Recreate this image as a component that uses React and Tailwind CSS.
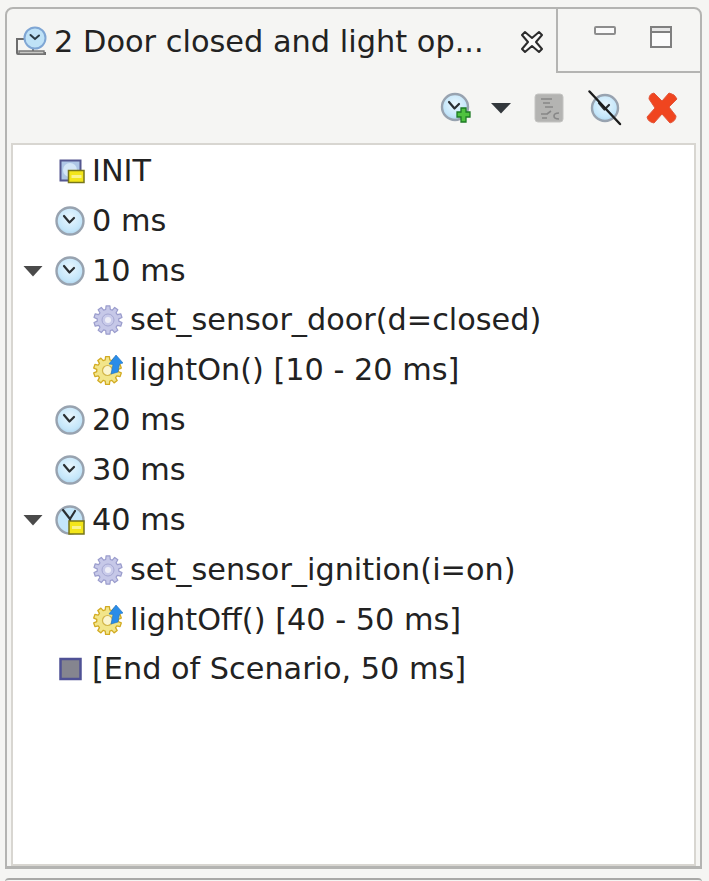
import React from "react";

function gearPath(cx, cy, ro, ri, teeth) {
  const pts = [];
  const step = (Math.PI * 2) / teeth;
  for (let i = 0; i < teeth; i++) {
    const a = i * step - Math.PI / 2;
    const o = [a - step * 0.22, a + step * 0.22];
    const n = [a + step * 0.34, a + step * 0.66];
    o.forEach((t) => pts.push([cx + ro * Math.cos(t), cy + ro * Math.sin(t)]));
    n.forEach((t) => pts.push([cx + ri * Math.cos(t), cy + ri * Math.sin(t)]));
  }
  return "M" + pts.map((p) => p[0].toFixed(2) + " " + p[1].toFixed(2)).join("L") + "Z";
}

const Clock = ({ cx = 15, cy = 15, r = 13.5 }) => (
  <g>
    <defs>
      <radialGradient id="clockFace" cx="0.5" cy="0.4" r="0.65">
        <stop offset="0" stopColor="#eaf7fe" />
        <stop offset="0.7" stopColor="#c4e6fa" />
        <stop offset="1" stopColor="#a9cfe8" />
      </radialGradient>
    </defs>
    <circle cx={cx} cy={cy} r={r} fill="url(#clockFace)" stroke="#98a3b0" strokeWidth="2.4" />
    <path
      d={`M${cx - 6} ${cy - 5}L${cx - 0.5} ${cy + 1.5}L${cx + 4} ${cy - 3}`}
      fill="none"
      stroke="#2a2f33"
      strokeWidth="2.2"
      strokeLinecap="round"
      strokeLinejoin="round"
    />
  </g>
);

const IconClock = () => (
  <svg width="30" height="30" viewBox="0 0 30 30"><Clock /></svg>
);

const IconClockLocked = () => (
  <svg width="30" height="30" viewBox="0 0 30 30">
    <circle cx="15" cy="15" r="13.5" fill="#c4e6fa" stroke="#98a3b0" strokeWidth="2.4" />
    <path d="M8 5L15 14L20 6M15 14V20" fill="none" stroke="#2a2f33" strokeWidth="2.2" strokeLinecap="round" strokeLinejoin="round" />
    <rect x="14" y="16" width="15" height="13" fill="#f3e61a" stroke="#77761c" strokeWidth="1.5" />
    <rect x="17" y="21" width="9" height="3" fill="#faf48c" />
  </svg>
);

const IconInit = () => (
  <svg width="30" height="30" viewBox="0 0 30 30">
    <rect x="5.5" y="4.5" width="20" height="20" fill="#aec6e6" stroke="#54578f" strokeWidth="2" />
    <circle cx="15" cy="14" r="7" fill="#d4e6f7" />
    <rect x="13.5" y="14.5" width="15.5" height="12" fill="#f3e61a" stroke="#77761c" strokeWidth="1.5" />
    <rect x="16.5" y="19" width="10" height="3" fill="#faf48c" />
  </svg>
);

const IconEnd = () => (
  <svg width="30" height="30" viewBox="0 0 30 30">
    <rect x="5.5" y="5" width="20" height="20" fill="#85858f" stroke="#4f5195" strokeWidth="2.5" />
  </svg>
);

const IconGear = () => (
  <svg width="30" height="30" viewBox="0 0 30 30">
    <path d={gearPath(15, 15, 14.2, 10.8, 10)} fill="#c6c8e8" stroke="#9a9ccc" strokeWidth="1.2" strokeLinejoin="round" />
    <circle cx="15" cy="15" r="6" fill="#c9cbea" stroke="#a5a7d2" strokeWidth="1" />
    <circle cx="15" cy="15" r="3" fill="#eeeef8" />
  </svg>
);

const IconGearArrow = () => (
  <svg width="30" height="30" viewBox="0 0 30 30">
    <path d={gearPath(14.5, 15.5, 14, 10.8, 10)} fill="#f2e58a" stroke="#d2ab22" strokeWidth="1.3" strokeLinejoin="round" />
    <circle cx="14.5" cy="15.5" r="5" fill="#fbf5cf" stroke="#d2b64a" strokeWidth="1.2" />
    <path d="M23 0L30 8L26.5 9L25 17L18 19L20 9.5L16 9Z" fill="#2a8ce8" stroke="#1a70c4" strokeWidth="0.6" />
  </svg>
);

const IconExpanded = () => (
  <svg width="20" height="12" viewBox="0 0 20 12">
    <path d="M0.5 1H19.5L10 11.5Z" fill="#4a4a4a" />
  </svg>
);

const IconTab = () => (
  <svg width="32" height="30" viewBox="0 0 32 30">
    <path d="M2 13H18V27H30V28H3Q2 28 2 27Z" fill="#f4f4f2" stroke="#6d6d6d" strokeWidth="2" />
    <path d="M4 25H29V28H4Z" fill="#c9c9c6" stroke="#777" strokeWidth="1.4" />
    <circle cx="20" cy="12" r="10.5" fill="#bfe2f7" stroke="#7fa6d4" strokeWidth="2" />
    <path d="M15.5 9L20 13L24 9.5" fill="none" stroke="#2a3a44" strokeWidth="2" strokeLinecap="round" />
  </svg>
);

const IconClose = () => (
  <svg width="24" height="24" viewBox="0 0 24 24">
    <path
      d="M5 2L12 8L19 2L22 5L16 12L22 19L19 22L12 16L5 22L2 19L8 12L2 5Z"
      fill="#fbfbfa"
      stroke="#2c2c2c"
      strokeWidth="2"
      strokeLinejoin="round"
    />
  </svg>
);

const IconMin = () => (
  <svg width="22" height="10" viewBox="0 0 22 10">
    <rect x="1" y="1" width="20" height="7" rx="1" fill="#fafafa" stroke="#8d8d8d" strokeWidth="2" />
  </svg>
);

const IconMax = () => (
  <svg width="22" height="22" viewBox="0 0 22 22">
    <rect x="1" y="1" width="20" height="20" fill="#fbfbfb" stroke="#7f7f7f" strokeWidth="2" />
    <rect x="1" y="1" width="20" height="5" fill="#e6e6e6" stroke="#7f7f7f" strokeWidth="2" />
  </svg>
);

const IconClockAdd = () => (
  <svg width="32" height="32" viewBox="0 0 32 32">
    <Clock cx={15} cy={15} r={13} />
    <path
      d="M19 17H23V13H28V17H32V22H28V27H23V22H19Z"
      transform="translate(-2 3)"
      fill="#4fc23f"
      stroke="#1d7a24"
      strokeWidth="1.3"
    />
  </svg>
);

const IconDisabled = () => (
  <svg width="30" height="30" viewBox="0 0 30 30">
    <rect x="1" y="1" width="28" height="28" rx="3" fill="#b4b4b2" stroke="#c4c4c2" strokeWidth="1" />
    <path
      d="M7 6H18M9 10H16M11 14H19M7 21H14M8 25H13M17 18L13 21"
      stroke="#878787"
      strokeWidth="1.6"
      fill="none"
    />
    <path d="M25 20Q20 20 20 23Q20 26 25 26" stroke="#878787" strokeWidth="1.6" fill="none" />
  </svg>
);

const IconClockOff = () => (
  <svg width="34" height="36" viewBox="0 0 34 36">
    <Clock cx={17} cy={18} r={13} />
    <path d="M1.5 1.5L32 34" stroke="#1c1c1c" strokeWidth="2.4" strokeLinecap="round" />
  </svg>
);

const IconRemove = () => (
  <svg width="32" height="32" viewBox="0 0 32 32">
    <path
      d="M8 1L16 9L23 1Q29 2 31 7L23 15L30 24Q30 29 24 31L16 22L8 31Q2 30 1 25L9 16L3 7Q3 2 8 1Z"
      fill="#f0451f"
      stroke="#e2563a"
      strokeWidth="1"
    />
  </svg>
);

const rows = [
  { icon: <IconInit />, label: "INIT" },
  { icon: <IconClock />, label: "0 ms" },
  { icon: <IconClock />, label: "10 ms", open: true },
  { icon: <IconGear />, label: "set_sensor_door(d=closed)", child: true },
  { icon: <IconGearArrow />, label: "lightOn() [10 - 20 ms]", child: true },
  { icon: <IconClock />, label: "20 ms" },
  { icon: <IconClock />, label: "30 ms" },
  { icon: <IconClockLocked />, label: "40 ms", open: true },
  { icon: <IconGear />, label: "set_sensor_ignition(i=on)", child: true },
  { icon: <IconGearArrow />, label: "lightOff() [40 - 50 ms]", child: true },
  { icon: <IconEnd />, label: "[End of Scenario, 50 ms]" },
];

export default function App() {
  return (
    <div className="h-[881px] w-[709px] overflow-hidden bg-[#f5f5f3] pl-[5px] pr-[7px] pt-[7px] text-[#222222] font-['DejaVu_Sans',sans-serif]">
      <div className="flex h-[862px] flex-col rounded-t-[8px] border-2 border-b-[3px] border-[#b4b4b2]">
        <div className="flex h-[64px] shrink-0">
          <div className="flex w-[549px] items-start pl-[8px] pr-[12px] pt-[17px]">
            <IconTab />
            <span className="ml-[7px] -mt-[1px] text-[30.4px] leading-[34px] whitespace-nowrap">2 Door closed and light op...</span>
            <span className="ml-auto mt-[4px] flex"><IconClose /></span>
          </div>
          <div className="flex flex-1 items-start border-b-2 border-l-2 border-[#b4b4b2] pl-[36px] pt-[17px]">
            <span className="flex"><IconMin /></span>
            <span className="ml-[34px] flex"><IconMax /></span>
          </div>
        </div>
        <div className="flex h-[70px] shrink-0 items-center pl-[433px]">
          <IconClockAdd />
          <span className="ml-[19px] flex"><svg width="20" height="12" viewBox="0 0 20 12"><path d="M0 1H20L10 11.5Z" fill="#33383c" /></svg></span>
          <span className="ml-[23px] flex"><IconDisabled /></span>
          <span className="ml-[24px] flex"><IconClockOff /></span>
          <span className="ml-[24px] flex"><IconRemove /></span>
        </div>
        <div className="mx-[4px] flex-1 border-2 border-[#d8d6d1] bg-white pt-px">
          {rows.map((r) => (
            <div key={r.label} className={`flex h-[49.85px] items-center ${r.child ? "pl-[80px]" : "pl-[42px]"}`}>
              {r.open ? (
                <span className="-ml-[32px] mr-[12px] flex w-[20px]"><IconExpanded /></span>
              ) : null}
              <span className="flex w-[30px]">{r.icon}</span>
              <span className="ml-[7px] text-[30.3px] leading-[34px] whitespace-nowrap">{r.label}</span>
            </div>
          ))}
        </div>
      </div>
      <div className="mt-[9px] h-[10px] rounded-t-[4px] border-t-2 border-[#a9a9a7]" />
    </div>
  );
}
